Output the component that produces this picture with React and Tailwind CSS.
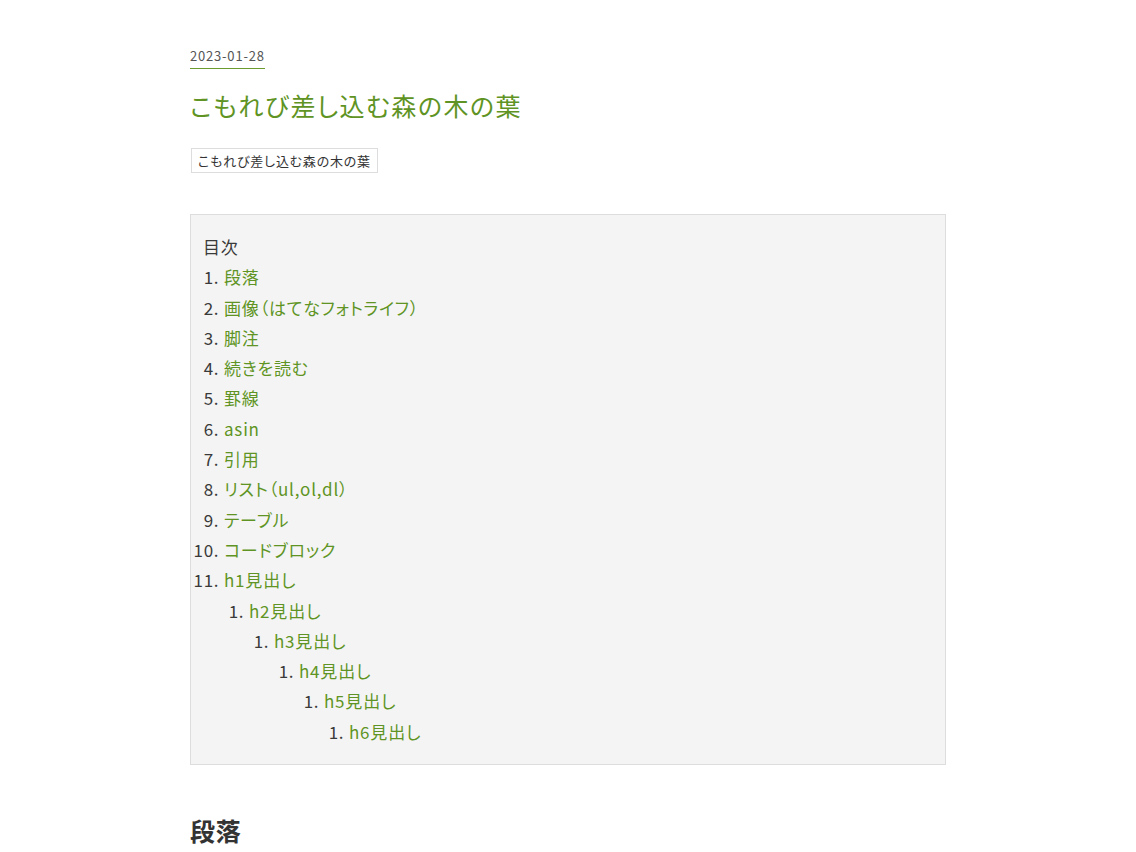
import React from 'react';

const toc = [
  '段落',
  '画像（はてなフォトライフ）',
  '脚注',
  '続きを読む',
  '罫線',
  'asin',
  '引用',
  'リスト（ul,ol,dl）',
  'テーブル',
  'コードブロック',
];

const headings = ['h2見出し', 'h3見出し', 'h4見出し', 'h5見出し', 'h6見出し'];

// Nested list for the h2..h6 chain
function Nested({ depth }) {
  if (depth >= headings.length) return null;
  return (
    <ol className="list-decimal pl-[25px]">
      <li>
        <a className="text-[#5f9424]">{headings[depth]}</a>
        <Nested depth={depth + 1} />
      </li>
    </ol>
  );
}

export default function App() {
  return (
    <div
      className="min-h-[852px] bg-white text-[#3a3a3a] tracking-[0.05em] [font-feature-settings:'palt']"
      style={{ fontFamily: '"Noto Sans CJK JP", "Noto Sans", sans-serif' }}
    >
      <div className="w-[756px] mx-auto pt-[42px]">
        {/* Date */}
        <div>
          <span className="inline-block text-[13px] leading-[20px] text-[#555] border-b border-[#6a9b2c] pb-[2px]">
            2023-01-28
          </span>
        </div>

        {/* Title */}
        <h1 className="mt-[18px] text-[25px] leading-[36px] tracking-[0.06em] text-[#5f9424] font-normal">
          こもれび差し込む森の木の葉
        </h1>

        {/* Category tag */}
        <div className="mt-[25px] ml-[1px] flex">
          <span className="block border border-[#ddd] px-[6px] text-[13px] leading-[23px] text-[#333]">
            こもれび差し込む森の木の葉
          </span>
        </div>

        {/* Table of contents */}
        <div className="mt-[41px] bg-[#f4f4f4] border border-[#ddd] pt-[17px] pb-[17px] pl-[12px] text-[17px] leading-[30.3px]">
          <div>目次</div>
          <ol className="list-decimal pl-[21px]">
            {toc.map((item) => (
              <li key={item}>
                <a className="text-[#5f9424]">{item}</a>
              </li>
            ))}
            <li>
              <a className="text-[#5f9424]">h1見出し</a>
              <Nested depth={0} />
            </li>
          </ol>
        </div>

        {/* Section heading */}
        <h2 className="mt-[47px] text-[25px] leading-[36px] font-bold text-[#333]">段落</h2>
      </div>
    </div>
  );
}
